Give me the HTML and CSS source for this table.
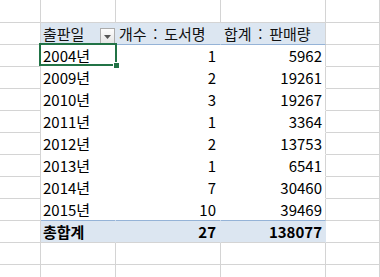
FILE: index.html
```html
<!DOCTYPE html>
<html lang="ko">
<head>
<meta charset="utf-8">
<link rel="stylesheet" href="styles.css">
</head>
<body>
<table class="sheet">
  <colgroup>
    <col class="c-a"><col class="c-b"><col class="c-c"><col class="c-d"><col class="c-e">
  </colgroup>
  <tr class="row-first"><td></td><td></td><td></td><td></td><td></td></tr>
  <tr class="row-head">
    <td></td>
    <td class="hd hd-b"><div class="hd-inner"><span>출판일</span><span class="dd"><svg width="7" height="4" viewBox="0 0 7 4"><path d="M0 0H7L3.5 4Z" fill="#555"/></svg></span></div></td>
    <td class="hd">개수 : 도서명</td>
    <td class="hd hd-d">합계 : 판매량</td>
    <td></td>
  </tr>
  <tr class="row-data"><td></td><td class="lbl sel-cell">2004년<div class="sel"><div class="handle"></div></div></td><td class="num">1</td><td class="num num-d">5962</td><td></td></tr>
  <tr class="row-data"><td></td><td class="lbl">2009년</td><td class="num">2</td><td class="num num-d">19261</td><td></td></tr>
  <tr class="row-data"><td></td><td class="lbl">2010년</td><td class="num">3</td><td class="num num-d">19267</td><td></td></tr>
  <tr class="row-data"><td></td><td class="lbl">2011년</td><td class="num">1</td><td class="num num-d">3364</td><td></td></tr>
  <tr class="row-data"><td></td><td class="lbl">2012년</td><td class="num">2</td><td class="num num-d">13753</td><td></td></tr>
  <tr class="row-data"><td></td><td class="lbl">2013년</td><td class="num">1</td><td class="num num-d">6541</td><td></td></tr>
  <tr class="row-data"><td></td><td class="lbl">2014년</td><td class="num">7</td><td class="num num-d">30460</td><td></td></tr>
  <tr class="row-data row-last"><td></td><td class="lbl">2015년</td><td class="num">10</td><td class="num num-d">39469</td><td></td></tr>
  <tr class="row-total"><td></td><td class="tot lbl">총합계</td><td class="tot num">27</td><td class="tot num num-d">138077</td><td></td></tr>
  <tr><td></td><td></td><td></td><td></td><td></td></tr>
  <tr><td></td><td></td><td></td><td></td><td></td></tr>
</table>
</body>
</html>
```
FILE: styles.css
```css
html, body {
  margin: 0;
  padding: 0;
  background: #fff;
  overflow: hidden;
}
.sheet {
  table-layout: fixed;
  border-collapse: separate;
  border-spacing: 0;
  width: 380px;
  font-family: "Noto Sans CJK KR", "Noto Sans", sans-serif;
  font-size: 15px;
  color: #000;
}
.c-a { width: 41px; }
.c-b { width: 75px; }
.c-c { width: 105px; }
.c-d { width: 105px; }
.c-e { width: 54px; }
.sheet td {
  box-sizing: border-box;
  height: 22px;
  padding: 0;
  border-right: 1px solid #d4d4d4;
  border-bottom: 1px solid #d4d4d4;
  line-height: 20px;
  white-space: nowrap;
  overflow: visible;
  vertical-align: bottom;
}
.row-first td { height: 23px; }

.hd {
  background: #dce6f1;
  border-right-color: #dce6f1 !important;
  border-bottom-color: #95b3d7 !important;
  padding-left: 3px !important;
  word-spacing: 2.5px;
  color: #111;
}
.hd-d { border-right-color: #d4d4d4 !important; }
.hd-b { padding-left: 2px !important; }
.hd-inner {
  display: flex;
  justify-content: space-between;
  align-items: flex-end;
  height: 21px;
}
.hd-inner span:first-child { line-height: 20px; }
.dd {
  box-sizing: border-box;
  width: 15px;
  height: 16px;
  border: 1px solid #acacac;
  background: linear-gradient(#fdfdfd, #e6e6e6);
  display: flex;
  align-items: center;
  justify-content: center;
}
.dd svg { display: block; margin-top: 1px; }

.row-data td:nth-child(2),
.row-data td:nth-child(3) {
  border-right-color: #fff;
  border-bottom-color: #fff;
}
.row-data td:nth-child(4) { border-bottom-color: #fff; }
.row-last td:nth-child(2),
.row-last td:nth-child(3),
.row-last td:nth-child(4) { border-bottom-color: #95b3d7; }

.lbl { padding-left: 2px !important; }
.num { text-align: right; padding-right: 4px !important; }
.num-d { padding-right: 3px !important; }

.tot {
  background: #dce6f1;
  font-weight: 700;
  border-right-color: #dce6f1 !important;
}
.tot.num-d { border-right-color: #dce6f1 !important; }

.sel-cell { position: relative; }
.sel {
  position: absolute;
  left: -2px;
  top: -2px;
  width: 78px;
  height: 23px;
  box-sizing: border-box;
  border: 2px solid #217346;
}
.handle {
  position: absolute;
  right: -5px;
  bottom: -5px;
  width: 5px;
  height: 5px;
  background: #217346;
  border: 1px solid #fff;
}
```
